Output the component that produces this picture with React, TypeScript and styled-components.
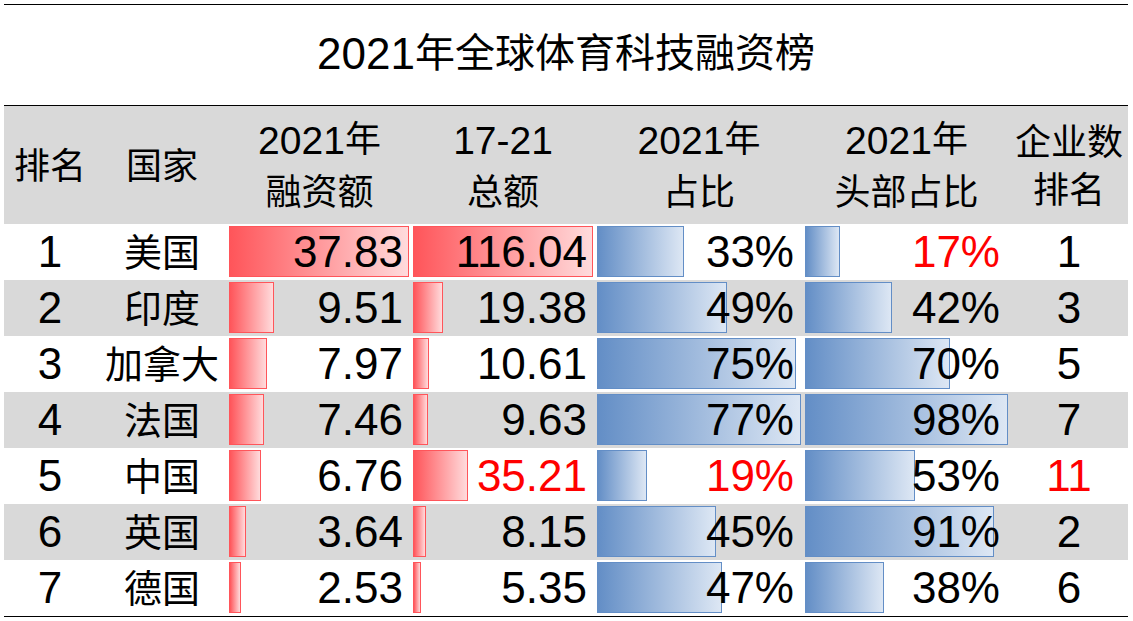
import React from "react";
import styled, { createGlobalStyle } from "styled-components";

const GlobalStyle = createGlobalStyle`
  html, body { margin: 0; padding: 0; background: #ffffff; }
  body {
    font-family: "Liberation Sans", Arial, "Noto Sans CJK SC", sans-serif;
    color: #000000;
  }
`;

const LATIN = `"Liberation Sans", Arial, "Noto Sans CJK SC", sans-serif`;
const CJK = `"Noto Sans CJK SC", "Liberation Sans", sans-serif`;
const COLS = "92px 132px 183px 184px 208px 207px 118px";

const TONES = {
  red: { base: "#ff555a", light: "#ffdbdc" },
  blue: { base: "#638ec6", light: "#dde7f4" },
};
type Tone = keyof typeof TONES;

const Page = styled.div`
  padding: 4px 5px 0 4px;
`;

const Board = styled.section`
  width: 1124px;
  border-top: 1px solid #000000;
  border-bottom: 1px solid #000000;
`;

const TitleBar = styled.header`
  height: 100px;
  display: flex;
  align-items: center;
  justify-content: center;
  padding-bottom: 4px;
  box-sizing: border-box;
`;

const Title = styled.h1`
  margin: 0;
  font-family: ${CJK};
  font-size: 40px;
  font-weight: 400;
  line-height: 1;
  white-space: nowrap;
`;

const TitleNum = styled.span`
  font-family: ${LATIN};
  font-size: 44px;
  vertical-align: -2px;
`;

const HeadRow = styled.div`
  display: grid;
  grid-template-columns: ${COLS};
  height: 118px;
  border-top: 1px solid #000000;
  background: #d9d9d9;
`;

const HeadCell = styled.div`
  display: flex;
  flex-direction: column;
  align-items: center;
  justify-content: center;
  padding-bottom: 5px;
  box-sizing: border-box;
  font-family: ${CJK};
  font-size: 36px;
  line-height: 48px;
  white-space: nowrap;
`;

const HeadLine = styled.span`
  display: block;
`;

const HNum = styled.span`
  font-family: ${LATIN};
  font-size: 39px;
  vertical-align: -2px;
`;

const Row = styled.div<{ $shade: boolean }>`
  display: grid;
  grid-template-columns: ${COLS};
  height: 56px;
  background: ${(p) => (p.$shade ? "#d9d9d9" : "#ffffff")};
`;

const NumCell = styled.div<{ $hot?: boolean }>`
  display: flex;
  align-items: center;
  justify-content: center;
  font-family: ${LATIN};
  font-size: 44px;
  line-height: 1;
  color: ${(p) => (p.$hot ? "#ff0000" : "#000000")};
`;

const NameCell = styled.div`
  display: flex;
  align-items: center;
  justify-content: center;
  padding-bottom: 4px;
  box-sizing: border-box;
  font-family: ${CJK};
  font-size: 38px;
  line-height: 1;
  white-space: nowrap;
`;

const BarCell = styled.div<{ $pl: number }>`
  display: grid;
  grid-template-areas: "stack";
  grid-template-columns: minmax(0, 1fr);
  padding: 2px 2px 3px ${(p) => p.$pl}px;
  box-sizing: border-box;
  min-width: 0;
`;

const Bar = styled.div<{ $tone: Tone }>`
  grid-area: stack;
  justify-self: start;
  align-self: stretch;
  box-sizing: border-box;
  border: 1px solid ${(p) => TONES[p.$tone].base};
  background: linear-gradient(
    to right,
    ${(p) => TONES[p.$tone].base},
    ${(p) => TONES[p.$tone].light}
  );
`;

const Value = styled.span<{ $hot?: boolean; $pr: number }>`
  grid-area: stack;
  justify-self: end;
  align-self: center;
  padding-right: ${(p) => p.$pr}px;
  font-family: ${LATIN};
  font-size: 44px;
  line-height: 1;
  white-space: nowrap;
  color: ${(p) => (p.$hot ? "#ff0000" : "#000000")};
`;

type Item = {
  rank: number;
  name: string;
  amount: number;
  total: number;
  share: number;
  head: number;
  count: number;
  hot?: { total?: boolean; share?: boolean; head?: boolean; count?: boolean };
};

const DATA: Item[] = [
  { rank: 1, name: "美国", amount: 37.83, total: 116.04, share: 33, head: 17, count: 1, hot: { head: true } },
  { rank: 2, name: "印度", amount: 9.51, total: 19.38, share: 49, head: 42, count: 3 },
  { rank: 3, name: "加拿大", amount: 7.97, total: 10.61, share: 75, head: 70, count: 5 },
  { rank: 4, name: "法国", amount: 7.46, total: 9.63, share: 77, head: 98, count: 7 },
  { rank: 5, name: "中国", amount: 6.76, total: 35.21, share: 19, head: 53, count: 11, hot: { total: true, share: true, count: true } },
  { rank: 6, name: "英国", amount: 3.64, total: 8.15, share: 45, head: 91, count: 2 },
  { rank: 7, name: "德国", amount: 2.53, total: 5.35, share: 47, head: 38, count: 6 },
];

const maxOf = (k: "amount" | "total" | "share" | "head") =>
  Math.max(...DATA.map((d) => d[k]));

const MAX = {
  amount: maxOf("amount"),
  total: maxOf("total"),
  share: maxOf("share"),
  head: maxOf("head"),
};

function DataBar(props: {
  value: number;
  max: number;
  label: string;
  tone: Tone;
  pl: number;
  pr: number;
  hot?: boolean;
}) {
  const { value, max, label, tone, pl, pr, hot } = props;
  return (
    <BarCell $pl={pl}>
      <Bar $tone={tone} style={{ width: `${(value / max) * 100}%` }} />
      <Value $hot={hot} $pr={pr}>
        {label}
      </Value>
    </BarCell>
  );
}

export default function App() {
  return (
    <>
      <GlobalStyle />
      <Page>
        <Board>
          <TitleBar>
            <Title>
              <TitleNum>2021</TitleNum>年全球体育科技融资榜
            </Title>
          </TitleBar>
          <HeadRow>
            <HeadCell>排名</HeadCell>
            <HeadCell>国家</HeadCell>
            <HeadCell>
              <HeadLine>
                <HNum>2021</HNum>年
              </HeadLine>
              <HeadLine>融资额</HeadLine>
            </HeadCell>
            <HeadCell>
              <HeadLine>
                <HNum>17-21</HNum>
              </HeadLine>
              <HeadLine>总额</HeadLine>
            </HeadCell>
            <HeadCell>
              <HeadLine>
                <HNum>2021</HNum>年
              </HeadLine>
              <HeadLine>占比</HeadLine>
            </HeadCell>
            <HeadCell>
              <HeadLine>
                <HNum>2021</HNum>年
              </HeadLine>
              <HeadLine>头部占比</HeadLine>
            </HeadCell>
            <HeadCell>
              <HeadLine>企业数</HeadLine>
              <HeadLine>排名</HeadLine>
            </HeadCell>
          </HeadRow>
          {DATA.map((d, i) => (
            <Row key={d.rank} $shade={i % 2 === 1}>
              <NumCell>{d.rank}</NumCell>
              <NameCell>{d.name}</NameCell>
              <DataBar value={d.amount} max={MAX.amount} label={d.amount.toFixed(2)} tone="red" pl={1} pr={6} />
              <DataBar value={d.total} max={MAX.total} label={d.total.toFixed(2)} tone="red" pl={2} pr={6} hot={d.hot?.total} />
              <DataBar value={d.share} max={MAX.share} label={`${d.share}%`} tone="blue" pl={2} pr={7} hot={d.hot?.share} />
              <DataBar value={d.head} max={MAX.head} label={`${d.head}%`} tone="blue" pl={2} pr={8} hot={d.hot?.head} />
              <NumCell $hot={d.hot?.count}>{d.count}</NumCell>
            </Row>
          ))}
        </Board>
      </Page>
    </>
  );
}
